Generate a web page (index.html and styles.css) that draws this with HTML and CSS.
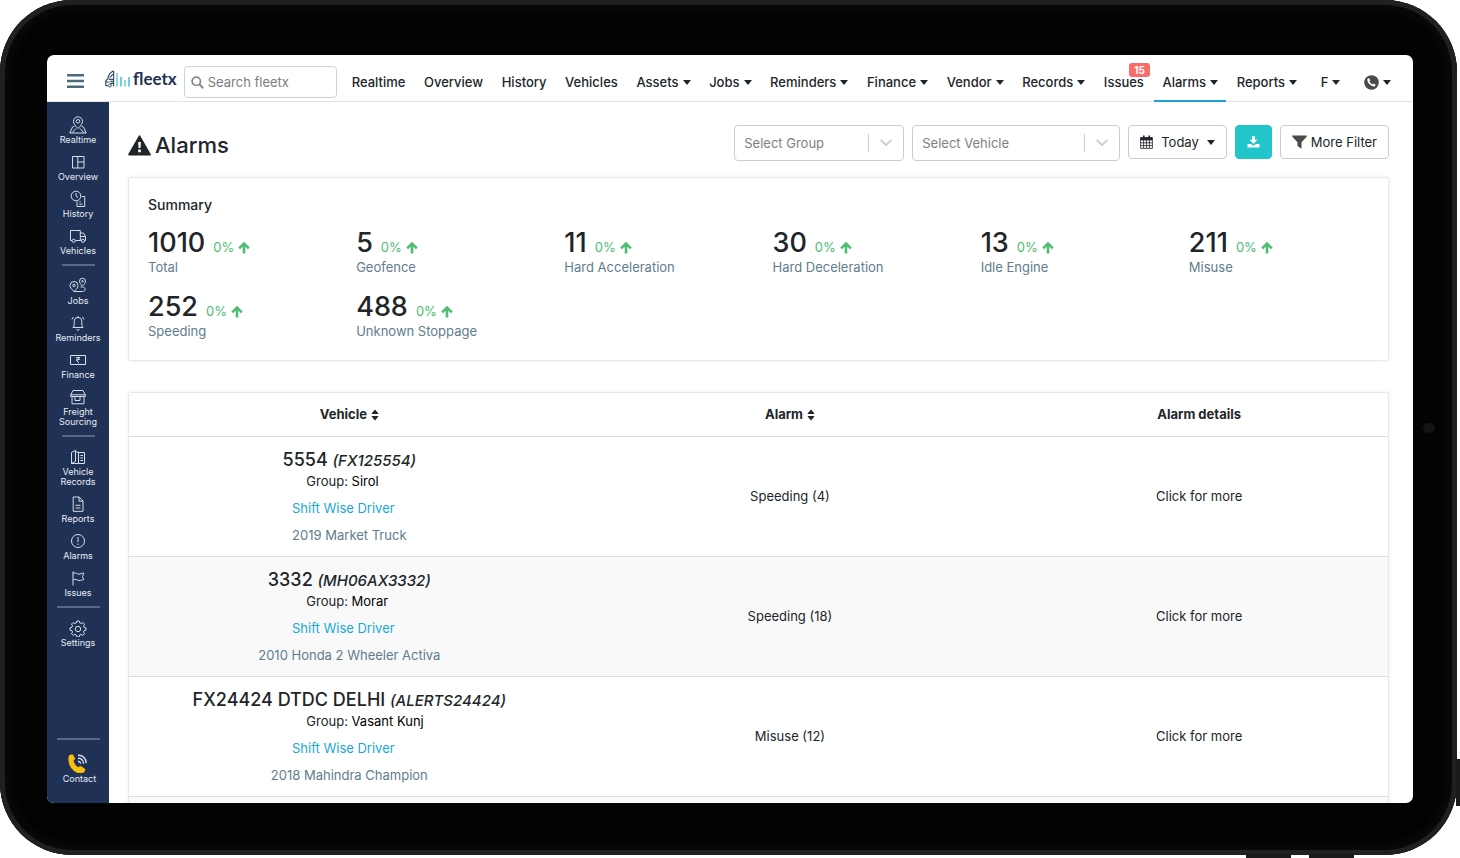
FILE: index.html
```html
<!DOCTYPE html>
<html lang="en">
<head>
<meta charset="utf-8">
<meta name="viewport" content="width=device-width, initial-scale=1">
<title>Alarms - fleetx</title>
<link rel="stylesheet" href="styles.css">
</head>
<body>
<svg class="sprite" aria-hidden="true">
  <symbol id="up" viewBox="0 0 12 12"><path d="M6 11.4V2.2M1.2 6.4 6 1.6l4.8 4.8" fill="none" stroke="currentColor" stroke-width="2.6"/></symbol>
  <symbol id="sort" viewBox="0 0 8 12"><path d="M4 .6 7.4 4.6Q7.6 5 7 5H1Q.4 5 .6 4.6zM4 11.4 7.4 7.4Q7.6 7 7 7H1Q.4 7 .6 7.4z" fill="currentColor"/></symbol>
  <symbol id="chev" viewBox="0 0 12 8"><path d="m1.2 1.4 4.8 4.8 4.8-4.8" fill="none" stroke="currentColor" stroke-width="1.9" stroke-linecap="round"/></symbol>
</svg>
<div class="tablet">
  <span class="camera"></span>
  <span class="key key-side"></span>
  <span class="key key-left"></span>
  <span class="key key-right"></span>
  <div class="screen">
    <header class="topbar">
      <button class="menu" aria-label="Menu"><svg width="17" height="14" viewBox="0 0 17 14"><path d="M0 1.3h17M0 7h17M0 12.7h17" stroke="#4b6b7c" stroke-width="2.4"/></svg></button>
      <a class="logo" href="#">
        <svg width="26" height="18" viewBox="0 0 26 18" aria-hidden="true" fill="none">
          <path d="M8.6.8v15.4M8.6.8C5.2 2.6 3.4 5.600 2.800 8.600L.8 11v4.400l2 .4M4.800 7.600l3.200-3.400M3.600 9.400h4.600M1 12h3.400M5.200 11.400h3M5.200 13.400h3" stroke="#3c4c6c" stroke-width="1.2"/>
          <circle cx="5" cy="15.400" r="1.500" stroke="#3c4c6c"/>
          <path d="M12 3v13.500M20 10v6.500" stroke="#5fd9b4" stroke-width="1.500"/>
          <path d="M16 7v9.500M24 7v9.500" stroke="#45b9ea" stroke-width="1.500"/>
        </svg><span>fleetx</span>
      </a>
      <label class="search">
        <svg width="13" height="13" viewBox="0 0 13 13" aria-hidden="true"><circle cx="5.300" cy="5.300" r="4.200" fill="none" stroke="#888" stroke-width="1.700"/><path d="m8.400 8.400 3.800 3.800" stroke="#888" stroke-width="2"/></svg>
        <input type="text" placeholder="Search fleetx" aria-label="Search fleetx">
      </label>
      <nav class="nav">
        <a href="#">Realtime</a>
        <a href="#">Overview</a>
        <a href="#">History</a>
        <a href="#">Vehicles</a>
        <a href="#">Assets<i class="caret"></i></a>
        <a href="#">Jobs<i class="caret"></i></a>
        <a href="#">Reminders<i class="caret"></i></a>
        <a href="#">Finance<i class="caret"></i></a>
        <a href="#">Vendor<i class="caret"></i></a>
        <a href="#">Records<i class="caret"></i></a>
        <a href="#">Issues<b class="badge">15</b></a>
        <a href="#" class="active">Alarms<i class="caret"></i></a>
        <a href="#">Reports<i class="caret"></i></a>
        <a href="#" class="user">F<i class="caret"></i></a>
        <a href="#" class="user" aria-label="Call"><svg width="15" height="15" viewBox="0 0 15 15"><circle cx="7.500" cy="7.500" r="7.300" fill="#4a4a4a"/><path d="M4.800 3 3.300 4.100c-.3 3.600 3.600 7.700 7.300 7.500l1.200-1.500-2.200-1.500-1.200.9C7 8.700 6 7.600 5.400 6.300l1-1.100z" fill="#fff"/></svg><i class="caret"></i></a>
      </nav>
    </header>
    <div class="body">
      <aside class="sidebar">
        <a href="#"><svg viewBox="0 0 18 18"><path d="M9 12.500C6 9.500 4.500 7.500 4.500 5.300a4.500 4.500 0 0 1 9 0c0 2.200-1.500 4.200-4.500 7.200zM5.500 10.200 3.500 11 .8 17h16.400l-2.700-6-2-.8M3 16.800l4-4.300M15 16.800l-4-4.300"/><circle cx="9" cy="5.300" r="1.800"/></svg>Realtime</a>
        <a href="#"><svg viewBox="0 0 18 18"><path d="M3.500 3.500h11.500v11.500H3.500zM8.800 3.500v11.500M8.800 9H15M3.500 9h0"/></svg>Overview</a>
        <a href="#"><svg viewBox="0 0 18 18"><circle cx="7" cy="6" r="4.800"/><path d="M7 3v3l2 1.500M12.800 6.500h2.900v10H8v-5M10.300 14.200h3.200M10.300 11.800h1.500"/></svg>History</a>
        <a href="#"><svg viewBox="0 0 18 18"><path d="M3 13.500H1.500v-10h9.800v10H6.500M11.300 6h3l2.200 3.500v4h-1M11.300 9.500h5M11.300 13.500h1"/><circle cx="4.700" cy="13.800" r="1.600"/><circle cx="13.900" cy="13.800" r="1.600"/></svg>Vehicles</a>
        <hr>
        <a href="#"><svg viewBox="0 0 18 18"><path d="M5 14.500C2.200 12 1 10.300 1 8.500a4 4 0 0 1 8 0c0 1.800-1.200 3.500-4 6zM13.500 9C11.300 7 10.500 5.500 10.500 4.200a3 3 0 0 1 6 0c0 1.300-.8 2.800-3 4.800zM5 14.500h8.500c3.500 0 3.500-4.500 0-4.500h-2"/><circle cx="5" cy="8.500" r="1.200"/><circle cx="13.500" cy="4.300" r=".8"/></svg>Jobs</a>
        <a href="#"><svg viewBox="0 0 18 18"><path d="M4 13.500h10l-1.200-2V7.200a3.800 3.800 0 0 0-7.600 0v4.300zM7.500 15.500q1.500 1.500 3 0M9 3.200V2M3 5.500 4.500 3M15 5.500 13.500 3"/></svg>Reminders</a>
        <a href="#"><svg viewBox="0 0 18 18"><path d="M1.500 4.500h15v9h-15zM7 6.500h4M7 8.300h4M7.500 6.500c3 0 3 3 0 3l2.600 2.600"/></svg>Finance</a>
        <a href="#"><svg viewBox="0 0 18 18"><path d="M4 2.500h10l2.300 4.300v1.700H1.700V6.800zM3 8.500v7.300h12V8.500M1.700 6.800h14.600M6 8.500v4h5v-4"/></svg>Freight<br>Sourcing</a>
        <hr>
        <a href="#"><svg viewBox="0 0 18 18"><path d="M2.500 4.500 6.500 2.300v11L2.500 15.500zM6.500 4h3v11.500h-7M9.500 4.500h6v11h-6M11.300 7.500H14M11.300 10H14M11.300 12.500H14"/></svg>Vehicle<br>Records</a>
        <a href="#"><svg viewBox="0 0 18 18"><path d="M4.200 2h6l3.800 4v10.300H4.200zM10 2v4.200h4M6.500 10.300h5M6.500 13h5"/></svg>Reports</a>
        <a href="#"><svg viewBox="0 0 18 18"><circle cx="9" cy="9" r="6.500"/><path d="M9 5v5M9 11.500V13"/></svg>Alarms</a>
        <a href="#"><svg viewBox="0 0 18 18"><path d="M4 2.500v14M4 4.500c3-2 4 1.500 7 .5 1.500-.5 2.500-1.200 3.800-1L13.500 7.500l1.200 3.300c-2-.3-2.700 1-4.700.8C8 11.300 7 9.500 4 11"/></svg>Issues</a>
        <hr class="wide">
        <a href="#"><svg viewBox="0 0 18 18"><path d="M7.800 2h2.400l.5 1.900 1.500.6 1.700-1 1.600 1.700-1 1.700.6 1.400 1.900.5v2.300l-1.900.5-.6 1.500 1 1.700-1.700 1.600-1.700-1-1.400.6-.5 1.900H7.800l-.5-1.900-1.500-.6-1.700 1-1.600-1.700 1-1.600-.6-1.500L1 11.100V8.800l1.900-.5.6-1.500-1-1.700 1.600-1.600 1.700 1 1.500-.6z"/><circle cx="9" cy="10" r="2.700"/></svg>Settings</a>
        <hr class="wide last">
        <a href="#" class="contact"><svg viewBox="0 0 22 22"><path d="M1.500 4.500 4.500 3.800l2.200 4-1.700 2c.8 3 2.700 5.400 5.100 6.800l2.500-1.200 4.300 2.900-.9 2.500c-3 2.100-7.500 1.300-11-2.200C1.300 15 0 8 1.500 4.500z" fill="#fcbf0b" stroke="#fcbf0b"/><path d="M10 10.500a2 2 0 0 1 2.500 2.200M10 7.300a5 5 0 0 1 5.500 5.400M10 4.300c5-.3 8.300 3.500 8.200 8" stroke-width="1.400"/></svg>Contact</a>
      </aside>
      <main class="main">
        <div class="head">
          <h1><svg width="23" height="21" viewBox="0 0 23 21" aria-hidden="true"><path d="M11.500 1.400 21.800 19.600H1.200z" fill="#212529" stroke="#212529" stroke-width="2" stroke-linejoin="round"/><path d="M10.200 7h2.700l-.4 6h-1.900zM10.200 14.600h2.600v2.600h-2.600z" fill="#fff"/></svg>Alarms</h1>
          <div class="pick group-pick"><select aria-label="Select Group"><option>Select Group</option></select><span class="arrow"><svg width="12" height="8"><use href="#chev"/></svg></span></div>
          <div class="pick vehicle-pick"><select aria-label="Select Vehicle"><option>Select Vehicle</option></select><span class="arrow"><svg width="12" height="8"><use href="#chev"/></svg></span></div>
          <button class="btn today"><svg width="13" height="14" viewBox="0 0 13 14" aria-hidden="true"><path d="M.6 2.500h11.800v10.900H.6zM.6 5h11.800M.6 7.800h11.800M.6 10.600h11.800M3.600 5v8.400M6.500 5v8.400M9.400 5v8.400" fill="none" stroke="#212529" stroke-width=".8"/><path d="M.6 2.500h11.800V5H.6zM3 .4h1.600v3H3zM8.400.4H10v3H8.400z" fill="#212529"/></svg>Today<i class="caret"></i></button>
          <button class="btn download" aria-label="Download"><svg width="13" height="12" viewBox="0 0 13 12"><path d="M5 .3h3v3.500h2.500L6.500 7.700l-4-3.900H5zM.5 8h3.400l2.600 1.800L9.100 8h3.400v3.400H.5z" fill="#fff"/></svg></button>
          <button class="btn more"><svg width="15" height="14" viewBox="0 0 15 14" aria-hidden="true"><path d="M.3.400h14.400v1.400L9.500 7.300v6.500L5.500 11V7.300L.3 1.800z" fill="#4a4a4a"/></svg>More Filter</button>
        </div>
        <section class="card summary">
          <h2>Summary</h2>
          <div class="stats">
            <div><strong>1010</strong><em>0%<svg><use href="#up"/></svg></em><p>Total</p></div>
            <div><strong>5</strong><em>0%<svg><use href="#up"/></svg></em><p>Geofence</p></div>
            <div><strong>11</strong><em>0%<svg><use href="#up"/></svg></em><p>Hard Acceleration</p></div>
            <div><strong>30</strong><em>0%<svg><use href="#up"/></svg></em><p>Hard Deceleration</p></div>
            <div><strong>13</strong><em>0%<svg><use href="#up"/></svg></em><p>Idle Engine</p></div>
            <div><strong>211</strong><em>0%<svg><use href="#up"/></svg></em><p>Misuse</p></div>
            <div><strong>252</strong><em>0%<svg><use href="#up"/></svg></em><p>Speeding</p></div>
            <div><strong>488</strong><em>0%<svg><use href="#up"/></svg></em><p>Unknown Stoppage</p></div>
          </div>
        </section>
        <div class="card">
          <table class="alarms">
            <thead><tr><th class="c1">Vehicle<svg width="8" height="12"><use href="#sort"/></svg></th><th class="c2">Alarm<svg width="8" height="12"><use href="#sort"/></svg></th><th>Alarm details</th></tr></thead>
            <tbody>
              <tr><td><p class="name">5554 <i>(FX125554)</i></p><p class="group">Group: <b>Sirol</b></p><a class="driver" href="#">Shift Wise Driver</a><p class="model">2019 Market Truck</p></td><td>Speeding (4)</td><td>Click for more</td></tr>
              <tr><td><p class="name">3332 <i>(MH06AX3332)</i></p><p class="group">Group: <b>Morar</b></p><a class="driver" href="#">Shift Wise Driver</a><p class="model">2010 Honda 2 Wheeler Activa</p></td><td>Speeding (18)</td><td>Click for more</td></tr>
              <tr><td><p class="name">FX24424 DTDC DELHI <i>(ALERTS24424)</i></p><p class="group">Group: <b>Vasant Kunj</b></p><a class="driver" href="#">Shift Wise Driver</a><p class="model">2018 Mahindra Champion</p></td><td>Misuse (12)</td><td>Click for more</td></tr>
              <tr class="next"><td></td><td></td><td></td></tr>
            </tbody>
          </table>
        </div>
      </main>
    </div>
  </div>
</div>
</body>
</html>
```
FILE: styles.css
```css
* { box-sizing: border-box; }
body { min-height: 100vh; margin: 0; background: #fff; color: #212529; font: 13px/20px Inter, "Liberation Sans", sans-serif; }
p, h1, h2 { margin: 0; }
a { color: inherit; text-decoration: none; }
button, input, select { font: inherit; color: inherit; }
.sprite { position: absolute; width: 0; height: 0; }

.tablet {
  position: relative;
  height: calc(100vh - 3px);
  margin-right: 3px;
  padding: 55px 44px 52px 47px;
  border-radius: 72px;
  background: #030303;
  box-shadow: inset 0 0 0 5px #202020, inset 0 0 16px 4px #121212;
}
.camera { position: absolute; right: 22px; top: 50%; width: 12px; height: 10px; margin-top: -5px; border-radius: 50%; background: #141414; }
.key { position: absolute; background: #1a1a1a; }
.key-side { right: -3px; bottom: 49px; width: 4px; height: 47px; }
.key-left { right: 166px; bottom: -3px; width: 45px; height: 4px; }
.key-right { right: 103px; bottom: -3px; width: 45px; height: 4px; }

.screen { display: flex; flex-direction: column; height: 100%; overflow: hidden; border-radius: 7px; background: #fff; }

.topbar { display: flex; flex: none; align-items: stretch; height: 47px; padding: 0 14px 0 20px; border-bottom: 1px solid #dfe5ea; }
.menu { display: flex; align-items: center; padding: 5px 0 0; border: 0; background: none; }
.logo { display: flex; align-items: center; margin-left: 21px; padding-top: 2px; color: #1f3154; font: 700 17px/20px Lato, sans-serif; }
.logo span { margin-left: 2px; }
.search { display: flex; align-items: center; gap: 4px; width: 153px; height: 32px; margin: 11px 7px 0; padding: 0 6px; border: 1px solid #c5d5de; border-radius: 4px; }
.search svg { flex: none; }
.search input { width: 100%; min-width: 0; padding: 0; border: 0; outline: 0; background: none; }
.search input::placeholder { color: #7d7d7d; opacity: 1; }
.nav { display: flex; flex: 1; justify-content: space-between; font-size: 13px; font-weight: 500; }
.nav a { position: relative; display: flex; align-items: center; height: 47px; padding: 9px 8px 0; border-bottom: 2px solid transparent; }
.nav .active { border-color: #1a9fda; }
.nav .user { margin-left: 5px; }
.caret { margin-left: 4px; border: 4px solid transparent; border-top: 5px solid #212529; border-bottom: 0; }
.badge { position: absolute; top: 8px; right: 2px; padding: 0 5px; border-radius: 3px; background: #f86c6b; color: #fff; font-size: 10px; line-height: 14px; }

.body { display: flex; flex: 1; min-height: 0; }
.sidebar { display: flex; flex: none; flex-direction: column; align-items: center; width: 62px; padding: 11px 0 14px; background: #1f3154; color: #e8edf5; font-size: 9px; line-height: 10px; text-align: center; }
.sidebar a { padding: 3px 0 5px; }
.sidebar svg { display: block; width: 18px; height: 18px; margin: 0 auto 1px; fill: none; stroke: #d7deea; stroke-width: 1; }
.sidebar hr { width: 33px; height: 2px; margin: 3px 0 8px; border: 0; background: #56678a; }
.sidebar .wide { width: 43px; }
.sidebar .last { margin-top: auto; }
.sidebar .contact { padding-left: 3px; }
.sidebar .contact svg { width: 22px; height: 22px; }

.main { flex: 1; min-width: 0; padding: 23px 24px 0 19px; }
.head { display: flex; align-items: flex-start; gap: 8px; }
h1 { display: flex; align-items: center; gap: 4px; margin-right: auto; padding-top: 4px; font-size: 22px; line-height: 32px; font-weight: 500; }
.pick { position: relative; height: 36px; }
.group-pick { width: 170px; }
.vehicle-pick { width: 208px; }
.pick select { width: 100%; height: 100%; padding: 0 9px; border: 1px solid #ccc; border-radius: 4px; background: #fff; color: #808080; appearance: none; }
.arrow { position: absolute; top: 9px; right: 1px; display: flex; align-items: center; justify-content: center; width: 35px; height: 18px; border-left: 1px solid #ccc; color: #ccc; pointer-events: none; }
.btn { display: flex; align-items: center; justify-content: center; height: 34px; padding: 0 11px; border: 1px solid #ccc; border-radius: 4px; background: #fff; }
.today { gap: 8px; }
.today .caret { margin-left: 0; }
.more { gap: 4px; }
.download { border-color: #22c6ca; background: #22c6ca; }

.card { border: 1px solid #e6eaee; border-radius: 2px; background: #fff; box-shadow: 0 0 4px #eceff2; }
.summary { margin: 16px 0 31px; padding: 17px 19px 21px; }
h2 { font-size: 14px; line-height: 20px; font-weight: 500; }
.stats { display: grid; grid-template-columns: repeat(6, 1fr); gap: 16px 28px; margin-top: 12px; }
.stats strong { font-size: 27px; line-height: 32px; font-weight: 500; }
.stats em { margin-left: 8px; color: #4dbd74; font-style: normal; }
.stats em svg { width: 12px; height: 12px; margin-left: 4px; vertical-align: -2px; }
.stats p { line-height: 16px; color: #607d8b; }

.alarms { width: 100%; border-collapse: collapse; table-layout: fixed; text-align: center; }
.c1, .c2 { width: 35%; }
.alarms th { height: 43px; padding: 0; font-weight: 700; }
.alarms th svg { margin-left: 4px; vertical-align: -2px; }
.alarms td { height: 120px; padding: 0; border-top: 1px solid #d5dfe5; }
.alarms tr:nth-child(even) { background: #f9f9f9; }
.name { padding-top: 2px; font-size: 18px; line-height: 21px; font-weight: 500; }
.name i { font-size: 15px; }
.group { width: 86px; margin: 0 auto; text-align: left; white-space: nowrap; }
.group b { font-weight: 400; color: #000; }
.driver { display: block; margin: 7px 0; padding-right: 12px; color: #20a8d8; }
.model { color: #607d8b; }
```
